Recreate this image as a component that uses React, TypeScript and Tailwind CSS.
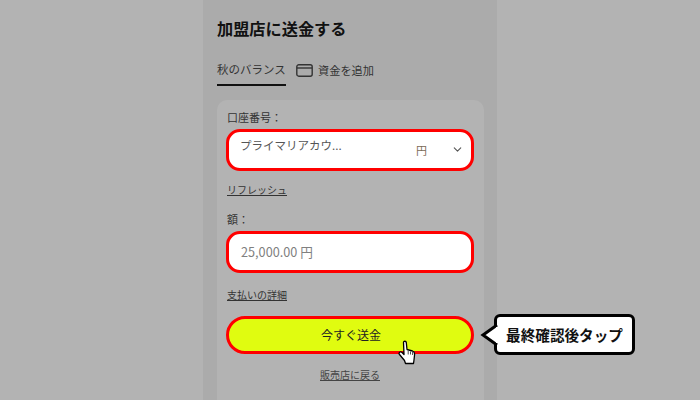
import React from 'react';
import { ChevronDown } from 'lucide-react';

const font = { fontFamily: '"Noto Sans CJK JP", "Liberation Sans", sans-serif' };

const App: React.FC = () => {
  return (
    <div className="relative w-[700px] h-[400px] overflow-hidden bg-[#b3b3b3] flex justify-center" style={font}>
      {/* Center column */}
      <div className="w-[294px] h-full bg-[#ababab] px-[14px]">
        <h1 className="mt-[16px] text-[16.2px] leading-[24px] font-bold text-[#111]">加盟店に送金する</h1>

        {/* Tabs */}
        <div className="mt-[20px] flex items-start text-[11.5px] leading-[18px] text-[#333]">
          <div className="w-[69px] h-[26px] border-b-2 border-[#111] whitespace-nowrap">秋のバランス</div>
          <div className="ml-[10px] flex items-center gap-[5px] mt-[1px]">
            <svg width="17" height="13" viewBox="0 0 17 13" fill="none" stroke="#333" strokeWidth="1.4">
              <rect x="0.8" y="0.8" width="15.4" height="11.4" rx="2" />
              <path d="M1 4H16" />
            </svg>
            <span className="text-[11.2px]">資金を追加</span>
          </div>
        </div>

        {/* Card */}
        <div className="mt-[14px] w-[267px] h-[320px] bg-[#b3b3b3] rounded-[10px] pl-[9px] pr-[10px] pt-[8px]">
          <div className="ml-[1px] text-[11px] leading-[18px] text-[#333]">口座番号：</div>
          <div className="mt-[3px] relative h-[42px] bg-white border-[3px] border-[#f00] rounded-[14px] text-[#555]">
            <span className="absolute left-[11px] top-[4px] text-[11.5px] leading-[18px] whitespace-nowrap">プライマリアカウ...</span>
            <span className="absolute left-[187px] top-[9px] text-[11px] leading-[18px] text-[#7a6a55]">円</span>
            <ChevronDown className="absolute left-[222px] top-[11px] text-[#555]" size={13} strokeWidth={2} />
          </div>

          <div className="ml-[1px] mt-[11px] text-[10px] leading-[16px] text-[#333] underline">リフレッシュ</div>

          <div className="ml-[1px] mt-[12px] text-[11px] leading-[18px] text-[#333]">額：</div>
          <div className="mt-[3px] h-[42px] bg-white border-[3px] border-[#f00] rounded-[14px] flex items-center pl-[12px] text-[12.7px] text-[#808080]">
            25,000.00 円
          </div>

          <div className="ml-[1px] mt-[14px] text-[10px] leading-[16px] text-[#333] underline">支払いの詳細</div>

          <div className="mt-[13px] h-[38px] bg-[#e0fc10] border-[3px] border-[#f00] rounded-full flex items-center justify-center pl-[2px] text-[12px] text-[#222]">
            今すぐ送金
          </div>

          <div className="mt-[13px] text-center text-[10px] leading-[16px] text-[#444] underline">販売店に戻る</div>
        </div>
      </div>

      {/* Callout */}
      <div className="absolute left-[494px] top-[314px] w-[141px] h-[41px] bg-white border-[3px] border-black rounded-[6px] flex items-center justify-center text-[14.6px] font-bold text-[#111] whitespace-nowrap">
        最終確認後タップ
      </div>
      <svg className="absolute left-[480px] top-[322px]" width="18" height="26" viewBox="0 0 18 26">
        <path d="M17 3 L3 13 L17 23" fill="white" stroke="black" strokeWidth="3" strokeLinejoin="miter" />
        <path d="M18 5 V21 H16 V5 Z" fill="white" />
      </svg>

      {/* Hand cursor */}
      <svg className="absolute left-[398px] top-[340px]" width="18" height="25" viewBox="0 0 18 25">
        <path
          d="M5.5 2.5 C5.5 0.8 8.2 0.8 8.3 2.5 L9 9.5 L14.5 11 C16.3 11.6 16.8 12.5 16.6 14.5 L16 20 L15.5 23.5 H7.5 L6.5 20.5 L1.5 14.5 C0.3 13 2 11 3.8 12.3 L6 14.5 Z"
          fill="white"
          stroke="black"
          strokeWidth="1.3"
          strokeLinejoin="round"
        />
        <path d="M10.2 11 V14.5 M12.5 11.5 V14.5 M14.6 12 V15" stroke="black" strokeWidth="0.7" fill="none" />
      </svg>
    </div>
  );
};

export default App;
